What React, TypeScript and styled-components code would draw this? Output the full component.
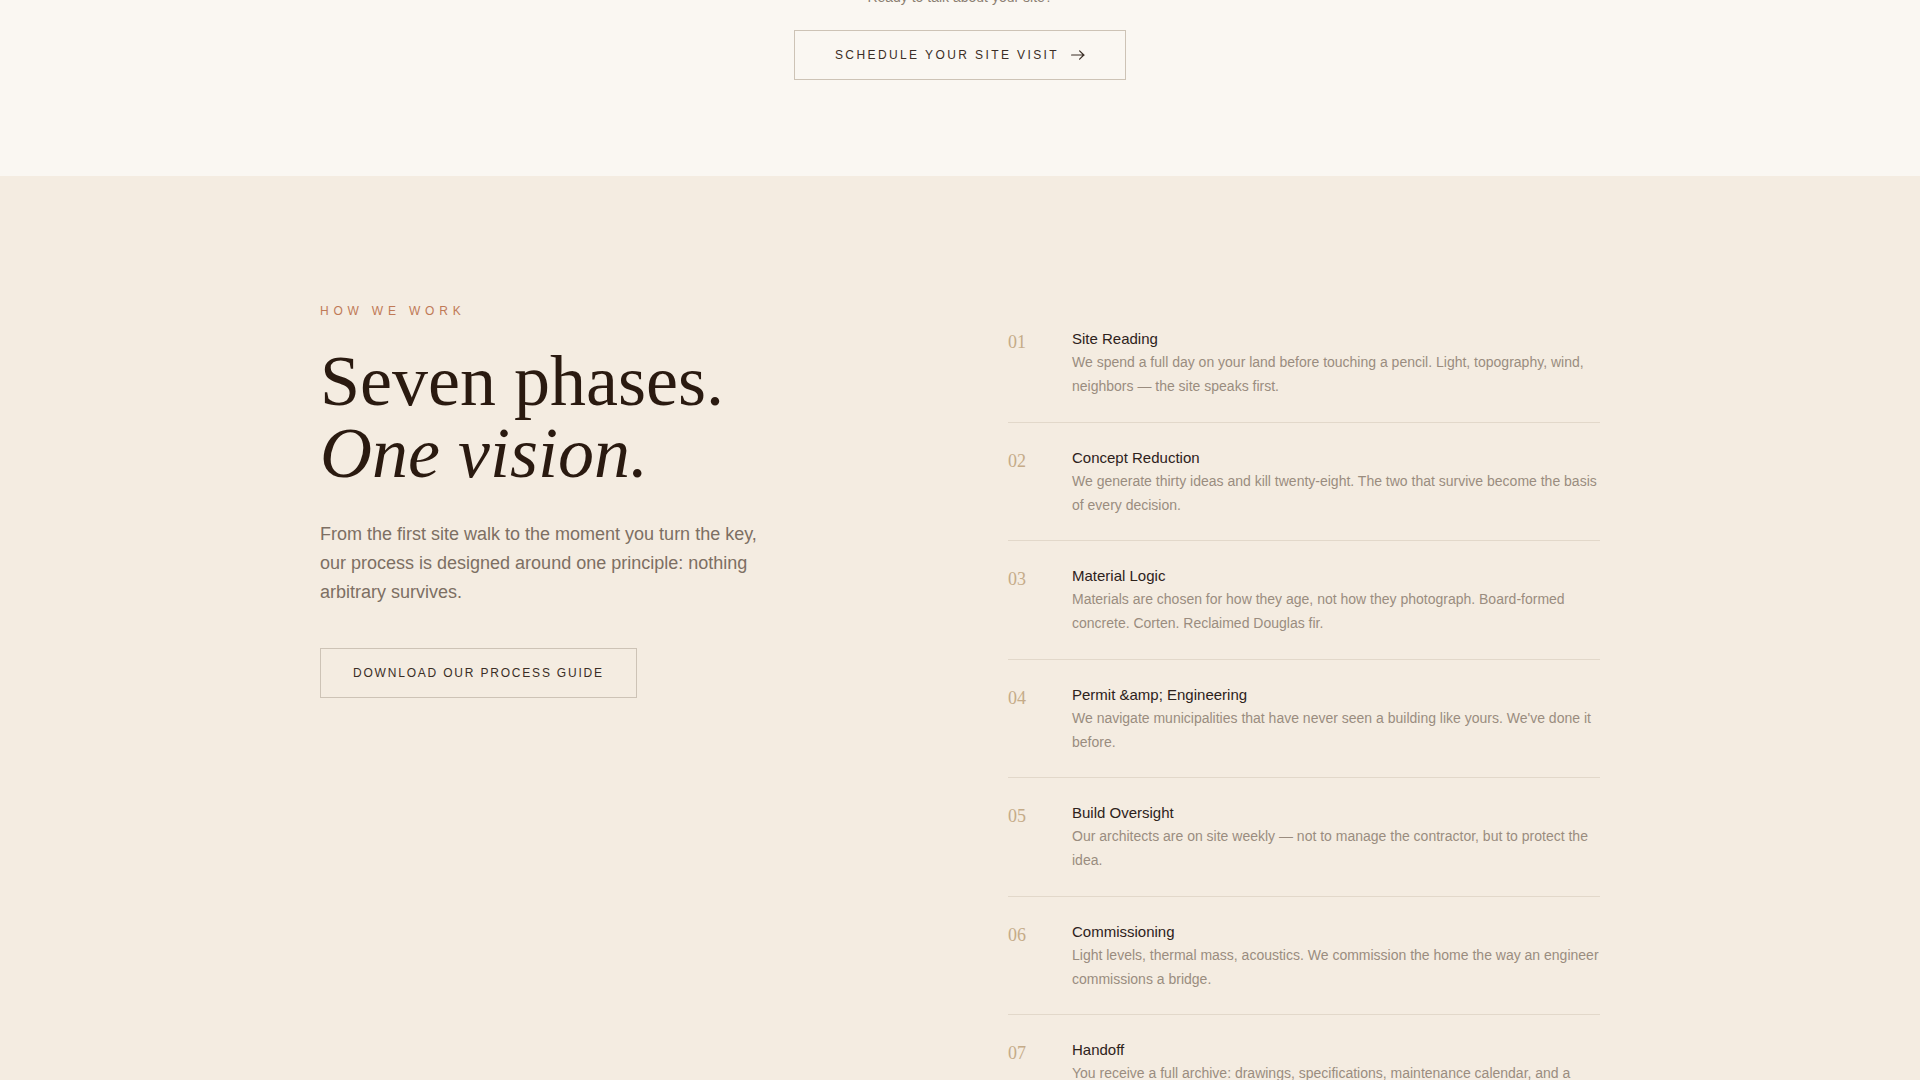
import * as React from 'react'
import styled, { createGlobalStyle } from 'styled-components'

// ページ全体の基本スタイル
const GlobalStyle = createGlobalStyle`
  html, body {
    margin: 0;
    padding: 0;
  }
  body {
    background: #f4ece1;
    font-family: "Liberation Sans", Arial, sans-serif;
    -webkit-font-smoothing: antialiased;
  }
  * {
    box-sizing: border-box;
  }
`

const Phases = [
  {
    title: 'Site Reading',
    text: 'We spend a full day on your land before touching a pencil. Light, topography, wind, neighbors — the site speaks first.',
  },
  {
    title: 'Concept Reduction',
    text: 'We generate thirty ideas and kill twenty-eight. The two that survive become the basis of every decision.',
  },
  {
    title: 'Material Logic',
    text: 'Materials are chosen for how they age, not how they photograph. Board-formed concrete. Corten. Reclaimed Douglas fir.',
  },
  {
    title: 'Permit &amp; Engineering',
    text: "We navigate municipalities that have never seen a building like yours. We've done it before.",
  },
  {
    title: 'Build Oversight',
    text: 'Our architects are on site weekly — not to manage the contractor, but to protect the idea.',
  },
  {
    title: 'Commissioning',
    text: 'Light levels, thermal mass, acoustics. We commission the home the way an engineer commissions a bridge.',
  },
  {
    title: 'Handoff',
    text: 'You receive a full archive: drawings, specifications, maintenance calendar, and a standing invitation to call us.',
  },
]

// 上部の CTA エリア
const CtaBand = styled.section`
  background: #faf7f2;
  display: flex;
  flex-direction: column;
  align-items: center;
  padding: 0 0 96px;
`

const CtaLead = styled.p`
  margin: -13px 0 23px;
  font-size: 14px;
  line-height: 20px;
  color: #8c7f72;
`

const OutlineButton = styled.a<{ $spacing: string; $pad: number }>`
  display: inline-flex;
  align-items: center;
  gap: 12px;
  height: 50px;
  padding: 0 ${(p) => p.$pad}px;
  border: 1px solid #cdc3b6;
  background: transparent;
  color: #3a2e26;
  font-family: "Liberation Sans", Arial, sans-serif;
  font-size: 12px;
  letter-spacing: ${(p) => p.$spacing};
  text-transform: uppercase;
  text-decoration: none;
  cursor: pointer;
`

// 「How we work」セクション
const ProcessSection = styled.section`
  background: #f4ece1;
  padding: 128px 0 160px;
`

const Inner = styled.div`
  width: 1280px;
  margin: 0 auto;
  display: grid;
  grid-template-columns: 1fr 1fr;
  column-gap: 96px;
  align-items: start;
`

const Intro = styled.div`
  display: flex;
  flex-direction: column;
  align-items: flex-start;
`

const Eyebrow = styled.span`
  font-size: 12px;
  line-height: 1.2;
  letter-spacing: 0.4em;
  text-transform: uppercase;
  color: #c07a57;
  margin-bottom: 27px;
`

const Heading = styled.h2`
  margin: 0;
  font-family: "Liberation Serif", "Times New Roman", serif;
  font-weight: 400;
  font-size: 72px;
  line-height: 1;
  color: #2a1a10;

  em {
    font-style: italic;
  }
`

const IntroText = styled.p`
  margin: 31px 0 41px;
  max-width: 460px;
  font-size: 18px;
  line-height: 29px;
  color: #7d6f63;
`

const PhaseList = styled.ol`
  list-style: none;
  margin: 0;
  padding: 0;
`

const PhaseRow = styled.li`
  display: grid;
  grid-template-columns: 64px 1fr;
  padding: 24px 0 23.5px;
  border-bottom: 1px solid #e2d8ca;

  &:last-child {
    border-bottom: none;
  }
`

const PhaseNumber = styled.span`
  margin-top: 3px;
  font-family: "Liberation Serif", "Times New Roman", serif;
  font-size: 18px;
  line-height: 22px;
  color: #c5ab88;
`

const PhaseTitle = styled.h3`
  margin: 0;
  font-size: 15px;
  font-weight: 400;
  line-height: 22px;
  color: #2d221b;
`

const PhaseText = styled.p`
  margin: 0;
  font-size: 14px;
  line-height: 24px;
  color: #9a8c7f;
`

const Arrow: React.FC = () => (
  <svg width="14" height="10" viewBox="0 0 14 10" fill="none" stroke="currentColor" strokeWidth="1.2" strokeLinecap="round" strokeLinejoin="round">
    <path d="M0.6 5h12.6M8.6 0.9 12.8 5 8.6 9.1" />
  </svg>
)

export default function App() {
  return (
    <>
      <GlobalStyle />
      <CtaBand>
        <CtaLead>Ready to talk about your site?</CtaLead>
        <OutlineButton $spacing="0.2em" $pad={40}>
          Schedule your site visit
          <Arrow />
        </OutlineButton>
      </CtaBand>
      <ProcessSection>
        <Inner>
          <Intro>
            <Eyebrow>How we work</Eyebrow>
            <Heading>
              Seven phases.
              <br />
              <em>One vision.</em>
            </Heading>
            <IntroText>
              From the first site walk to the moment you turn the key, our process is designed around one principle: nothing arbitrary survives.
            </IntroText>
            <OutlineButton $spacing="0.15em" $pad={32}>
              Download our process guide
            </OutlineButton>
          </Intro>
          <PhaseList>
            {Phases.map((phase, i) => (
              <PhaseRow key={phase.title}>
                <PhaseNumber>{String(i + 1).padStart(2, '0')}</PhaseNumber>
                <div>
                  <PhaseTitle>{phase.title}</PhaseTitle>
                  <PhaseText>{phase.text}</PhaseText>
                </div>
              </PhaseRow>
            ))}
          </PhaseList>
        </Inner>
      </ProcessSection>
    </>
  )
}
